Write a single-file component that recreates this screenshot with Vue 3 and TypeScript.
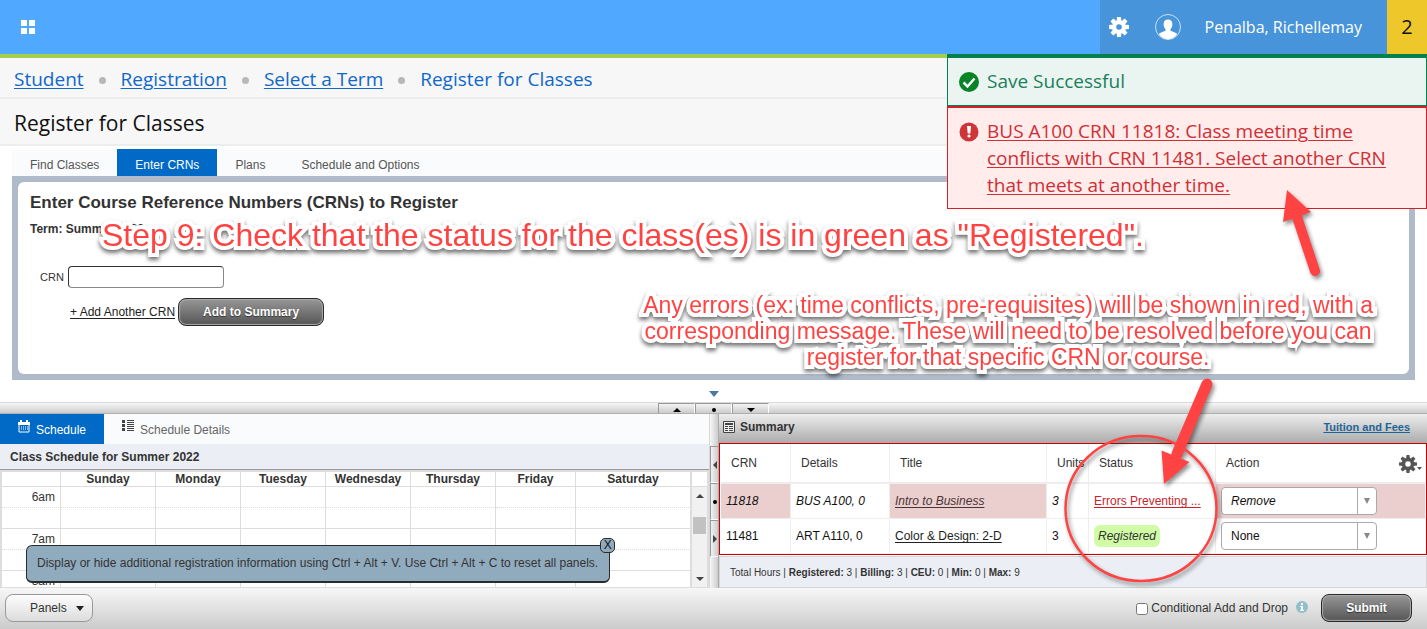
<script setup lang="ts">
import { ref } from 'vue'

interface CourseRow {
  crn: string
  details: string
  title: string
  units: number
  status: string
  error: boolean
  action: string
}

const crumbs = ['Student', 'Registration', 'Select a Term']
const tabs = ['Find Classes', 'Enter CRNs', 'Plans', 'Schedule and Options']
const activeTab = ref('Enter CRNs')
const crn = ref('')
const conditional = ref(false)
const hintOpen = ref(true)
const days = ['Sunday', 'Monday', 'Tuesday', 'Wednesday', 'Thursday', 'Friday', 'Saturday']
const slots = ['6am', '', '7am', '', '8am', '']
const rows = ref<CourseRow[]>([
  { crn: '11818', details: 'BUS A100, 0', title: 'Intro to Business', units: 3, status: 'Errors Preventing ...', error: true, action: 'Remove' },
  { crn: '11481', details: 'ART A110, 0', title: 'Color & Design: 2-D', units: 3, status: 'Registered', error: false, action: 'None' },
])
const totals: [string, number][] = [['Registered', 3], ['Billing', 3], ['CEU', 0], ['Min', 0], ['Max', 9]]
const teeth = [0, 45, 90, 135, 180, 225, 270, 315]
</script>

<template>
  <div class="page">
    <header class="topbar">
      <button class="bare apps" aria-label="Menu">
        <svg width="14" height="15" viewBox="0 0 14 15" fill="#fff"><path d="M0 0h6v6H0zM8 0h6v6H8zM0 8h6v6H0zM8 8h6v6H8z" /></svg>
      </button>
      <div class="account">
        <button class="bare" aria-label="Settings">
          <svg width="20" height="20" viewBox="-10 -10 20 20">
            <g fill="#fff"><path v-for="t in teeth" :key="t" d="M-2-10H2L2.5-5H-2.5Z" :transform="`rotate(${t})`" /></g>
            <circle r="4.8" fill="none" stroke="#fff" stroke-width="4" />
          </svg>
        </button>
        <button class="bare user">
          <svg width="26" height="26" viewBox="0 0 26 26">
            <circle cx="13" cy="13" r="12.5" fill="none" stroke="#c9e0f5" />
            <path fill="#fff" d="M13 5.5c3 0 4.4 2 4.4 4.7 0 2.200-.8 3.800-1.900 4.900v1.600c2.600 1 5.200 1.700 6.700 3.200A12 12 0 0 1 13 25.200a12 12 0 0 1-9.200-5.300c1.500-1.500 4.100-2.200 6.700-3.200v-1.600c-1.100-1.100-1.900-2.700-1.900-4.900C8.600 7.500 10 5.500 13 5.500Z" />
          </svg>
          <span>Penalba, Richellemay</span>
        </button>
      </div>
      <button class="bare count">2</button>
    </header>

    <nav class="crumbs" aria-label="Breadcrumb">
      <template v-for="c in crumbs" :key="c"><a href="#">{{ c }}</a><i class="dot"></i></template>
      <span>Register for Classes</span>
    </nav>
    <h1>Register for Classes</h1>

    <main>
      <div class="tabs">
        <button v-for="t in tabs" :key="t" class="bare tab" :class="{ active: t === activeTab }" @click="activeTab = t">{{ t }}</button>
      </div>
      <section class="entry">
        <div class="entry-inner">
          <h2>Enter Course Reference Numbers (CRNs) to Register</h2>
          <p class="term">Term: Summer 2022</p>
          <div class="crn-row"><label for="crn">CRN</label><input id="crn" v-model="crn" type="text" /></div>
          <div class="add-row"><a href="#">+ Add Another CRN</a><button class="dark add">Add to Summary</button></div>
        </div>
      </section>
      <div class="collapse"><svg width="10" height="6" viewBox="0 0 10 6"><path d="M0 0h10L5 6Z" fill="#4a7ba6" /></svg></div>
    </main>

    <div class="hsplit">
      <button class="bare" aria-label="Expand up"><svg width="8" height="4" viewBox="0 0 8 4"><path d="M0 4L4 0L8 4Z" /></svg></button>
      <button class="bare" aria-label="Reset rows"><svg width="4" height="4" viewBox="0 0 4 4"><circle cx="2" cy="2" r="2" /></svg></button>
      <button class="bare" aria-label="Expand down"><svg width="8" height="4" viewBox="0 0 8 4"><path d="M0 0L4 4L8 0Z" /></svg></button>
    </div>

    <div class="panes">
      <section class="schedule">
        <div class="sched-tabs">
          <button class="bare sched-tab active">
            <svg width="12" height="13" viewBox="0 0 12 13">
              <path d="M1 3h10v9H1z" fill="none" stroke="#fff" />
              <path d="M0 2h12v3H0zM2 0h2v3H2zM8 0h2v3H8z" fill="#fff" />
              <path d="M3 7h7M3 9h7" stroke="#fff" stroke-dasharray="1 1" />
            </svg>
            <span>Schedule</span>
          </button>
          <button class="bare sched-tab">
            <svg width="12" height="12" viewBox="0 0 12 12" fill="#444"><path d="M0 0h3v3H0zM0 4h3v3H0zM0 8h3v3H0zM5 0h7v1H5zM5 2h7v1H5zM5 4h7v1H5zM5 6h7v1H5zM5 8h7v1H5zM5 10h7v1H5z" /></svg>
            <span>Schedule Details</span>
          </button>
        </div>
        <h3>Class Schedule for Summer 2022</h3>
        <div class="calendar">
          <table>
            <colgroup><col class="c-time" /><col class="c-sun" /><col v-for="n in 4" :key="n" class="c-day" /><col class="c-fri" /><col /></colgroup>
            <thead><tr><th></th><th v-for="d in days" :key="d">{{ d }}</th></tr></thead>
            <tbody>
              <tr v-for="(s, i) in slots" :key="i" :class="{ half: i % 2 === 0 }"><td class="time">{{ s }}</td><td v-for="d in days" :key="d"></td></tr>
            </tbody>
          </table>
          <div class="scroller">
            <div class="scroll-head"></div>
            <svg width="8" height="4" viewBox="0 0 8 4"><path d="M0 4L4 0L8 4Z" fill="#444" /></svg>
            <div class="thumb"></div>
            <svg class="down" width="8" height="4" viewBox="0 0 8 4"><path d="M0 0L4 4L8 0Z" fill="#444" /></svg>
          </div>
        </div>
        <div v-if="hintOpen" class="hint" role="status">
          Display or hide additional registration information using Ctrl + Alt + V. Use Ctrl + Alt + C to reset all panels.
          <button class="hint-close" aria-label="Close" @click="hintOpen = false">X</button>
        </div>
      </section>

      <div class="vsplit">
        <button class="bare" aria-label="Expand left"><svg width="4" height="8" viewBox="0 0 4 8"><path d="M4 0L0 4L4 8Z" fill="#444" /></svg></button>
        <button class="bare" aria-label="Reset columns"><svg width="4" height="4" viewBox="0 0 4 4"><circle cx="2" cy="2" r="2" /></svg></button>
        <button class="bare" aria-label="Expand right"><svg width="4" height="8" viewBox="0 0 4 8"><path d="M0 0L4 4L0 8Z" fill="#444" /></svg></button>
      </div>

      <section class="summary">
        <div class="sum-head">
          <svg width="12" height="12" viewBox="0 0 12 12"><path d="M.5.5h11v11H.5z" fill="#eee" stroke="#444" /><path d="M2 2h8v2H2zM2 5h3v1H2zM2 7h3v1H2zM2 9h3v1H2zM6 5h4v1H6zM6 7h4v1H6zM6 9h4v1H6z" fill="#444" /></svg>
          <strong>Summary</strong>
          <a href="#">Tuition and Fees</a>
        </div>
        <div class="sum-body">
          <table>
            <colgroup><col class="s-crn" /><col class="s-det" /><col class="s-title" /><col class="s-units" /><col class="s-status" /><col /></colgroup>
            <thead>
              <tr>
                <th>CRN</th><th>Details</th><th>Title</th><th>Units</th><th>Status</th>
                <th>
                  <div class="action-head">Action
                    <button class="bare gear" aria-label="Columns">
                      <svg width="18" height="18" viewBox="-9 -9 18 18">
                        <g fill="#555"><path v-for="t in teeth" :key="t" d="M-1.500-9H1.500L2-5H-2Z" :transform="`rotate(${t})`" /></g>
                        <circle r="4.500" fill="none" stroke="#555" stroke-width="3.500" />
                      </svg>
                      <svg width="5" height="3" viewBox="0 0 5 3"><path d="M0 0h5L2.500 3Z" fill="#555" /></svg>
                    </button>
                  </div>
                </th>
              </tr>
            </thead>
            <tbody>
              <tr v-for="r in rows" :key="r.crn" :class="{ error: r.error }">
                <td>{{ r.crn }}</td>
                <td class="plain">{{ r.details }}</td>
                <td><a href="#">{{ r.title }}</a></td>
                <td class="plain">{{ r.units }}</td>
                <td class="plain status"><a v-if="r.error" href="#" class="bad">{{ r.status }}</a><span v-else class="good">{{ r.status }}</span></td>
                <td class="act">
                  <div class="select">
                    <select v-model="r.action" :aria-label="`Action for ${r.crn}`"><option>Remove</option><option>None</option></select>
                    <span class="arrow"><svg width="6" height="6" viewBox="0 0 6 6"><path d="M0 0h6L3 6Z" fill="#888" /></svg></span>
                  </div>
                </td>
              </tr>
            </tbody>
          </table>
        </div>
        <div class="totals">Total Hours<template v-for="[k, v] in totals" :key="k"> | <b>{{ k }}:</b> {{ v }}</template></div>
      </section>
    </div>

    <footer class="bottom">
      <button class="panels">Panels <svg width="8" height="5" viewBox="0 0 8 5"><path d="M0 0h8L4 5Z" fill="#222" /></svg></button>
      <label class="cond"><input v-model="conditional" type="checkbox" />Conditional Add and Drop</label>
      <svg class="info" width="12" height="12" viewBox="0 0 12 12"><circle cx="6" cy="6" r="6" fill="#90bfca" /><path d="M5 2h2v2H5zM4 5h3v4h1v1H4V9h1V6H4z" fill="#fff" /></svg>
      <button class="dark submit">Submit</button>
    </footer>

    <aside class="notices">
      <div class="ok">
        <svg width="20" height="20" viewBox="0 0 20 20"><circle cx="10" cy="10" r="10" fill="#078426" /><path d="M4.500 10.500l4 4 7-8" fill="none" stroke="#fff" stroke-width="2.500" /></svg>
        <span>Save Successful</span>
      </div>
      <div class="fail">
        <svg width="20" height="20" viewBox="0 0 20 20"><circle cx="10" cy="10" r="9.500" fill="#ce3538" /><path d="M8 4h4l-.7 7.500H8.700z" fill="#fff" /><circle cx="10" cy="14" r="1.600" fill="#fff" /></svg>
        <a href="#">BUS A100 CRN 11818: Class meeting time conflicts with CRN 11481. Select another CRN that meets at another time.</a>
      </div>
    </aside>

    <p class="note step">Step 9: Check that the status for the class(es) is in green as "Registered".</p>
    <p class="note errors">Any errors (ex: time conflicts, pre-requisites) will be shown in red, with a<br />corresponding message. These will need to be resolved before you can<br />register for that specific CRN or course.</p>
    <svg class="marks" width="300" height="420" viewBox="1050 180 300 420">
      <g fill="#ff4343" stroke="#ff4343">
        <path d="M1315 271L1296 214" stroke-width="10" stroke-linecap="round" />
        <path d="M1287 190L1311 212L1283 222Z" stroke="none" />
        <path d="M1207 384L1177 454" stroke-width="11" stroke-linecap="round" />
        <path d="M1164 484L1161.500 450.500L1189.500 462Z" stroke="none" />
        <ellipse cx="1141" cy="508.500" rx="75.500" ry="72.500" fill="none" stroke-width="2.500" />
      </g>
    </svg>
  </div>
</template>

<style>
body { margin: 0; background: #fff; }
</style>

<style scoped>
* { box-sizing: border-box; }
.page { position: relative; display: flex; flex-direction: column; height: 100vh; overflow: hidden; font: 12px/16px "Liberation Sans", Arial, sans-serif; color: #333; }
.page > * { flex-shrink: 0; }
button, input, select { font: inherit; color: inherit; margin: 0; }
.bare { border: 0; background: none; padding: 0; cursor: pointer; }
svg { display: block; flex: none; }
h1, h2, h3, p { margin: 0; }

.topbar { display: flex; height: 58px; background: #51a9ff; border-bottom: 4px solid #a4cf4e; font-family: "Open Sans", sans-serif; }
.apps { padding: 1px 21px 0; }
.account { display: flex; align-items: center; margin-left: auto; padding: 0 25px 0 9px; gap: 26px; background: #4894da; color: #fff; }
.user { display: flex; align-items: center; gap: 24px; font-size: 16px; line-height: 24px; }
.count { width: 40px; background: #eec72b; color: #111; font-size: 20px; }

.crumbs { display: flex; align-items: center; height: 41px; padding: 2px 14px 0; background: #f7f7f7; border-bottom: 2px solid #ededed; font: 400 19px/26px "Open Sans", sans-serif; color: #1068c8; }
.crumbs a { color: #1068c8; text-decoration-thickness: 1px; text-underline-offset: 2px; }
.dot { width: 7px; height: 7px; border-radius: 50%; background: #b8b8b8; margin: 4px 15px 0; }
h1 { height: 47px; padding: 0 14px; background: #f7f7f7; border-bottom: 2px solid #ededed; font: 500 21px/48px "Open Sans", sans-serif; color: #111; }

main { padding: 3px 12px 0; }
.tabs { display: flex; height: 27px; background: #f9fbfc; }
.tab { padding: 4px 18px 0; color: #555; }
.tab.active { background: #006ac6; color: #fff; }
.entry { padding: 6px; background: #afbbc9; }
.entry-inner { height: 192px; padding: 12px; border-radius: 6px; background: #fff; }
h2 { font-size: 17px; line-height: 18px; }
.term { margin-top: 9px; font-weight: bold; }
.crn-row { display: flex; align-items: center; gap: 4px; margin: 29px 0 0 10px; font-size: 11px; }
.crn-row input { width: 156px; height: 22px; border: 1px solid #888; border-top-color: #333; border-left-color: #333; border-radius: 4px; }
.add-row { display: flex; align-items: center; gap: 3px; margin: 10px 0 0 40px; }
.add-row a { color: #222; text-underline-offset: 2px; }
.dark { height: 28px; border: 1px solid #2b2b2b; border-radius: 8px; background: linear-gradient(#979797, #555); box-shadow: inset 0 0 1px 1px #aaa; color: #fff; font-weight: bold; text-shadow: 0 1px 1px #333; cursor: pointer; }
.add { padding: 0 24px; }
.collapse { display: flex; justify-content: center; height: 22px; padding-top: 11px; }

.hsplit { display: flex; justify-content: center; height: 12px; border-top: 1px solid #d8d8d8; border-bottom: 1px solid #b0b0b0; background: linear-gradient(#f7f7f7, #ccc); }
.hsplit button { display: flex; justify-content: center; width: 37px; padding-top: 4px; border-left: 1px solid #999; border-top: 1px solid #999; border-right: 1px solid #fff; }

.panes { display: flex; flex: 1; min-height: 174px; }
.schedule { position: relative; display: flex; flex-direction: column; flex: 709; min-width: 0; }
.sched-tabs { display: flex; height: 30px; flex: none; background: #f9fbfc; }
.sched-tab { display: flex; align-items: flex-start; gap: 6px; padding: 6px 18px 0; color: #666; }
.sched-tab span { padding-top: 2px; }
.sched-tab.active { background: #006ac6; color: #fff; }
h3 { flex: none; height: 26px; padding-left: 10px; border-bottom: 1px solid #999; background: #ebeff5; font-size: 12px; line-height: 26px; }
.calendar { display: flex; flex: 1; min-height: 0; overflow: hidden; border: solid #ddd; border-width: 2px 2px 1px; }
table { width: 100%; table-layout: fixed; border-collapse: separate; border-spacing: 0; }
.calendar table { flex: 1; align-self: flex-start; }
.c-time { width: 59px; } .c-sun { width: 95px; } .c-day { width: 85px; } .c-fri { width: 80px; }
.calendar th { height: 15px; padding: 0; border: solid #ddd; border-width: 0 1px 1px 0; line-height: 14px; }
.calendar td { height: 21px; padding: 0; border: solid #ddd; border-width: 0 1px 1px 0; }
.calendar .half td { border-bottom-style: dotted; }
.calendar .time { padding-right: 5px; text-align: right; }
.scroller { display: flex; flex-direction: column; align-items: center; width: 16px; border-left: 1px solid #ddd; background: #f1f1f1; }
.scroll-head { flex: none; width: 100%; height: 15px; margin-bottom: 7px; border-bottom: 1px solid #ddd; background: #fff; }
.thumb { flex: none; width: 13px; height: 17px; margin-top: 19px; background: #c1c1c1; }
.down { margin: auto 0 6px; }
.hint { position: absolute; left: 26px; bottom: 5px; padding: 9px 11px 10px 10px; border: 1px solid #2b2b2b; border-bottom-width: 2px; border-radius: 6px; background: #91abbe; color: #333; white-space: nowrap; }
.hint-close { position: absolute; top: -8px; right: -6px; width: 15px; height: 15px; padding: 0; border: 1px solid #2b2b2b; border-radius: 5px; background: #91abbe; color: #111; line-height: 13px; }

.vsplit { display: flex; flex-direction: column; flex: none; width: 10px; padding-top: 32px; border-left: 1px solid #d8d8d8; border-right: 1px solid #aaa; background: linear-gradient(90deg, #f7f7f7, #ccc); }
.vsplit button { display: flex; align-items: center; justify-content: flex-end; height: 37px; padding-right: 1px; border: solid #999; border-width: 1px 0 0 1px; border-bottom: 1px solid #fff; }

.summary { display: flex; flex-direction: column; flex: 708; min-width: 0; }
.sum-head { display: flex; align-items: center; flex: none; gap: 5px; height: 29px; padding: 0 17px 3px 4px; background: linear-gradient(#ededed, #acacac); }
.sum-head a { margin-left: auto; color: #1d6596; font-size: 11px; font-weight: bold; }
.sum-body { flex: none; border: 1px solid #c00; padding: 0 1px; }
.s-crn { width: 70px; } .s-det { width: 99px; } .s-title { width: 157px; } .s-units { width: 42px; } .s-status { width: 127px; }
.sum-body th { height: 40px; padding: 0 0 0 10px; border: solid #eee; border-width: 0 1px 2px 0; font-weight: normal; text-align: left; white-space: nowrap; }
.sum-body td { height: 35px; padding: 0 0 0 5px; border: solid #eee; border-width: 0 1px 1px 0; white-space: nowrap; color: #111; }
.sum-body th:last-child, .sum-body td:last-child { border-right: 0; }
.sum-body td a { color: #222; text-underline-offset: 2px; }
.error td { background: #ebcfcf; font-style: italic; }
.error td.plain { background: #fff; }
.sum-body .error a { color: #4a3535; }
.sum-body .error .bad { color: #c8232c; font-style: normal; }
.good { padding: 4px; border-radius: 6px; background: #d0fca6; font-style: italic; color: #333; }
.action-head { display: flex; align-items: center; }
.gear { display: flex; align-items: center; margin: 2px 3px 0 auto; }
.gear svg:last-child { margin-top: 8px; }
.select { position: relative; width: 156px; height: 28px; }
.select select { width: 100%; height: 100%; padding: 0 24px 0 9px; border: 1px solid #aaa; border-radius: 4px; appearance: none; background: #fff; font-style: inherit; }
.arrow { position: absolute; top: 1px; right: 1px; bottom: 1px; display: flex; align-items: center; justify-content: center; width: 19px; border-left: 1px solid #aaa; pointer-events: none; }
.totals { flex: 1; margin-top: 1px; padding: 8px 10px 0; border: 1px solid #d5d5d5; background: #ebeff5; font-size: 10px; white-space: nowrap; }

.bottom { display: flex; align-items: center; height: 41px; padding: 0 15px 1px 5px; background: linear-gradient(#f7f7f7, #cbcbcb); }
.panels { display: flex; align-items: center; gap: 9px; height: 28px; padding: 0 8px 0 24px; border: 1px solid #999; border-radius: 8px; background: linear-gradient(#fdfdfd, #dcdcdc); }
.cond { display: flex; align-items: center; gap: 3px; margin-left: auto; }
.cond input { width: 12px; height: 12px; margin: 2px 0 0; }
.info { margin: 0 13px 3px 8px; }
.submit { width: 91px; }

.notices { position: absolute; top: 54px; right: 0; width: 480px; font: 400 19px/27px "Open Sans", sans-serif; }
.notices > div { display: flex; align-items: flex-start; gap: 8px; padding: 10px 30px 9px 11px; border: 1px solid; }
.notices svg { margin-top: 4px; }
.notices .ok { height: 52px; border-color: #04804c; border-top-width: 4px; background: #eaf5f1; color: #1b7f5b; }
.notices .fail { height: 103px; padding-top: 10px; border-color: #cf2329; border-top-width: 2px; background: #ffeceb; }
.fail a { color: #cf2f35; text-decoration-thickness: 1px; text-underline-offset: 2px; }

.note { position: absolute; color: #ff4343; white-space: nowrap; -webkit-text-stroke: 8px #fff; paint-order: stroke fill; filter: drop-shadow(0 3px 2px rgba(0, 0, 0, .55)); }
.step { top: 217px; left: 102px; font-size: 32px; line-height: 36px; }
.errors { top: 292px; right: 54px; font-size: 23px; line-height: 26px; text-align: center; }
.marks { position: absolute; top: 180px; left: 1050px; filter: drop-shadow(2px 3px 2px rgba(0, 0, 0, .45)); pointer-events: none; }
</style>
